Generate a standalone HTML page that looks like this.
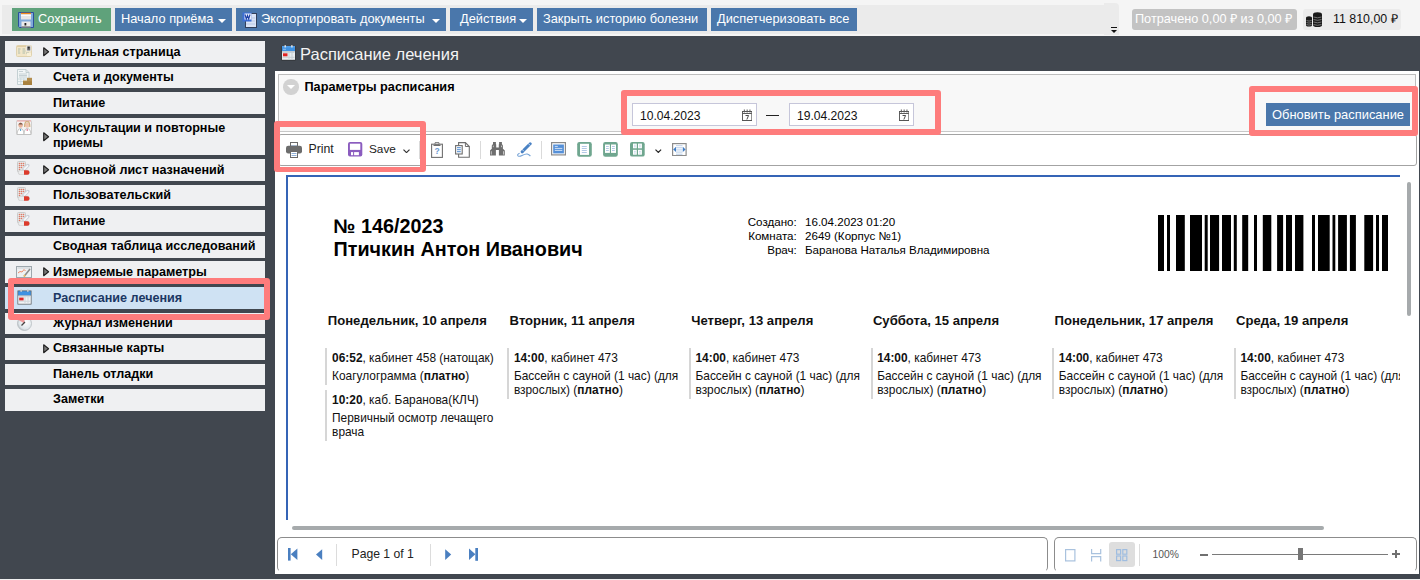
<!DOCTYPE html>
<html><head><meta charset="utf-8">
<style>
*{box-sizing:border-box}
html,body{margin:0;padding:0}
body{width:1420px;height:580px;overflow:hidden;position:relative;background:#41474f;font-family:"Liberation Sans",sans-serif;}
.a{position:absolute}
#topbar{left:0;top:0;width:1420px;height:36px;background:#f5f5f5}
#tb{left:2px;top:5px;width:1116px;height:29px;background:#ebebeb;border-top-right-radius:4px}
.btn{position:absolute;top:8px;height:23px;background:#4a77ab;color:#fff;font-size:12.8px;line-height:23px;white-space:nowrap}
.btn .t{position:absolute;top:-1px}
.caret{position:absolute;top:11px;width:0;height:0;border-left:4px solid transparent;border-right:4px solid transparent;border-top:4px solid #fff}
.side{position:absolute;left:5px;width:260px;background:#eff0f2;font-weight:bold;font-size:12.6px;color:#000}
.side .t{position:absolute;left:48px;top:0;line-height:15px;white-space:nowrap}
.side .ar{position:absolute;left:38px;width:0;height:0;border-top:4.5px solid transparent;border-bottom:4.5px solid transparent;border-left:5px solid #333}
.side svg{position:absolute}
.side .ar2{left:37.5px}
.inp{background:#fff;border:1px solid #c6c6da}
.it{position:absolute;left:7px;top:1.2px;font-size:12.1px;line-height:22px;color:#111}
.rt{position:absolute;font-weight:bold;font-size:19.8px;line-height:23px;color:#000;white-space:nowrap}
.ri{position:absolute;font-size:11.6px;line-height:14px;color:#000;white-space:nowrap}
.dh{position:absolute;font-weight:bold;font-size:13.1px;line-height:16px;color:#111;white-space:nowrap}
.en{position:absolute;border-left:2px solid #d6d6d6;padding:3px 0 2px 4.7px;font-size:11.9px;line-height:14px;color:#111;white-space:nowrap}
.en .tm{margin-bottom:4px}
.tbt{position:absolute;top:142px;font-size:12.3px;line-height:14px;color:#222;white-space:nowrap}
.rb{position:absolute;border:6px solid #fe7c7c;border-radius:3px}
.side.act{background:#cfe2f3;color:#1b3763}
</style></head><body>
<div id="topbar" class="a">
  <div id="tb" class="a"></div>
  <div class="btn" style="left:12px;width:99px;background:#5fa27b"><span class="t" style="left:26px">Сохранить</span></div>
  <div class="btn" style="left:115px;width:117px"><span class="t" style="left:6px">Начало приёма</span><span class="caret" style="left:103px"></span></div>
  <div class="btn" style="left:236px;width:210px"><span class="t" style="left:25px">Экспортировать документы</span><span class="caret" style="left:196px"></span></div>
  <div class="btn" style="left:450px;width:83px"><span class="t" style="left:10px">Действия</span><span class="caret" style="left:69px"></span></div>
  <div class="btn" style="left:537px;width:170px"><span class="t" style="left:6px">Закрыть историю болезни</span></div>
  <div class="btn" style="left:711px;width:146px"><span class="t" style="left:6px">Диспетчеризовать все</span></div>
  <div class="a" style="left:1132px;top:9px;width:165px;height:21px;border-radius:3px;background:#c3c3c3;color:#fff;font-size:12.7px;line-height:20px;padding-left:3px;white-space:nowrap">Потрачено 0,00 ₽ из 0,00 ₽</div>
  <div class="a" style="left:1303px;top:9px;width:98px;height:21px;border-radius:3px;background:#ebebeb;color:#111;font-size:12.4px;line-height:21px;white-space:nowrap"><span class="a" style="left:30px;top:0">11 810,00 ₽</span></div>
</div>

<!-- sidebar -->
<div id="sidebar">
<div class="side" style="top:41px;height:22px"><svg class="ic" style="left:11px;top:4.3px" width="16" height="12" viewBox="0 0 16 12"><rect x="0.5" y="0.5" width="15" height="11" rx="1" fill="#f2e6c8" stroke="#e0d2ae"/><path d="M1 1.5h14" stroke="#d9c79c" stroke-width="0.8"/><rect x="10.2" y="0.6" width="5" height="5.6" fill="#e8e8e8"/><rect x="11.2" y="1.4" width="3" height="4" fill="#6a6a6a"/><circle cx="12.7" cy="2.6" r="0.9" fill="#2a2a2a"/><path d="M2 4h2.5M2 6h1.8M2 8h2.2M6.5 4h2.5M6.5 6h3M6.5 8h2.5M10 8h3" stroke="#9fb3a6" stroke-width="0.8"/><rect x="11" y="8" width="4" height="3" fill="#f8f0d8"/></svg><svg class="ar2" style="top:6.2px" width="7" height="10" viewBox="0 0 7 10"><path d="M0.7 0.7L5.6 4.7L0.7 8.7z" fill="#7a7a7a" stroke="#1e1e1e" stroke-width="1.1" stroke-linejoin="round"/></svg><span class="t" style="top:0;line-height:22px">Титульная страница</span></div>
<div class="side" style="top:67px;height:21px"><svg class="ic" style="left:12px;top:2px" width="15" height="16" viewBox="0 0 15 16"><path d="M0.5 0.5h8.5l3 3V15.5H0.5z" fill="#f1f5f6" stroke="#b9c6ca" stroke-width="0.8"/><path d="M9 0.5v3h3" fill="none" stroke="#b9c6ca" stroke-width="0.8"/><path d="M2 2.5h4M2 5h8M2 6.5h8M2 8h8" stroke="#a9b9bf" stroke-width="0.6"/><path d="M1 10h10M1 12.5h7M3.8 8.8v6.5M6.8 8.8v6.5" stroke="#c7d5da" stroke-width="0.8"/><rect x="6" y="11.8" width="9" height="4.2" fill="#a8813f"/><rect x="10" y="8.8" width="5" height="3.5" fill="#b38e50"/><path d="M6 11.8h4" stroke="#c9a868" stroke-width="0.6"/></svg><span class="t" style="top:0;line-height:21px">Счета и документы</span></div>
<div class="side" style="top:92px;height:22px"><span class="t" style="top:0;line-height:22px">Питание</span></div>
<div class="side" style="top:118px;height:37px"><svg class="ic" style="left:11px;top:2px" width="16" height="15" viewBox="0 0 16 15"><rect x="0.5" y="0.5" width="15" height="14" rx="1" fill="#f3f3f3" stroke="#cfcfcf"/><path d="M1 1h14" stroke="#f3a0a0"/><ellipse cx="4.6" cy="5.2" rx="2.2" ry="2.6" fill="#e8b29b"/><path d="M2.2 4.5 Q4.6 0.8 7 4.5" fill="#7b5b4b"/><ellipse cx="11.2" cy="5.2" rx="2.2" ry="2.6" fill="#f0c4ae"/><path d="M8.6 7 Q8.6 1 11.2 1.8 Q13.8 1 13.8 7" fill="none" stroke="#cfae7d" stroke-width="1.2"/><path d="M1 14.5 Q1.5 8.5 4.6 8.5 Q7.7 8.5 8 14.5z" fill="#fff" stroke="#b9b9b9" stroke-width="0.8"/><path d="M8 14.5 Q8.3 8.5 11.2 8.5 Q14.5 8.5 15 14.5z" fill="#fff" stroke="#b9b9b9" stroke-width="0.8"/><path d="M4.6 9v2" stroke="#4aa0d0"/><path d="M11.2 9v2" stroke="#e06080"/></svg><svg class="ar2" style="top:13.7px" width="7" height="10" viewBox="0 0 7 10"><path d="M0.7 0.7L5.6 4.7L0.7 8.7z" fill="#7a7a7a" stroke="#1e1e1e" stroke-width="1.1" stroke-linejoin="round"/></svg><span class="t" style="top:3px;line-height:15px">Консультации и повторные<br>приемы</span></div>
<div class="side" style="top:159px;height:22px"><svg class="ic" style="left:12.3px;top:2.2px" width="13" height="14" viewBox="0 0 13 14"><rect x="0.5" y="0.5" width="8" height="10.5" rx="1" fill="#e6e6e6" stroke="#cacaca"/><g fill="#de7a66"><circle cx="2.5" cy="2.5" r=".8"/><circle cx="4.5" cy="2.5" r=".8"/><circle cx="6.5" cy="2.5" r=".8"/><circle cx="2.5" cy="4.5" r=".8"/><circle cx="4.5" cy="4.5" r=".8"/><circle cx="6.5" cy="4.5" r=".8"/><circle cx="2.5" cy="6.5" r=".8"/><circle cx="4.5" cy="6.5" r=".8"/><circle cx="2.5" cy="8.5" r=".8"/></g><path d="M7 8.3 L10.8 4.5" stroke="#c9ced6" stroke-width="3.4" stroke-linecap="round"/><path d="M7.3 8 L10.5 4.8" stroke="#f4f6f8" stroke-width="1.8" stroke-linecap="round"/><rect x="1.3" y="9.3" width="11.2" height="4.4" rx="2.2" fill="#ececec" stroke="#c4c4c4" stroke-width="0.6"/><path d="M7 9.3h3.3a2.2 2.2 0 0 1 0 4.4H7z" fill="#dc3b2c"/></svg><svg class="ar2" style="top:6.2px" width="7" height="10" viewBox="0 0 7 10"><path d="M0.7 0.7L5.6 4.7L0.7 8.7z" fill="#7a7a7a" stroke="#1e1e1e" stroke-width="1.1" stroke-linejoin="round"/></svg><span class="t" style="top:0;line-height:22px">Основной лист назначений</span></div>
<div class="side" style="top:185px;height:21px"><svg class="ic" style="left:12.3px;top:1.7px" width="13" height="14" viewBox="0 0 13 14"><rect x="0.5" y="0.5" width="8" height="10.5" rx="1" fill="#e6e6e6" stroke="#cacaca"/><g fill="#de7a66"><circle cx="2.5" cy="2.5" r=".8"/><circle cx="4.5" cy="2.5" r=".8"/><circle cx="6.5" cy="2.5" r=".8"/><circle cx="2.5" cy="4.5" r=".8"/><circle cx="4.5" cy="4.5" r=".8"/><circle cx="6.5" cy="4.5" r=".8"/><circle cx="2.5" cy="6.5" r=".8"/><circle cx="4.5" cy="6.5" r=".8"/><circle cx="2.5" cy="8.5" r=".8"/></g><path d="M7 8.3 L10.8 4.5" stroke="#c9ced6" stroke-width="3.4" stroke-linecap="round"/><path d="M7.3 8 L10.5 4.8" stroke="#f4f6f8" stroke-width="1.8" stroke-linecap="round"/><rect x="1.3" y="9.3" width="11.2" height="4.4" rx="2.2" fill="#ececec" stroke="#c4c4c4" stroke-width="0.6"/><path d="M7 9.3h3.3a2.2 2.2 0 0 1 0 4.4H7z" fill="#dc3b2c"/></svg><span class="t" style="top:0;line-height:21px">Пользовательский</span></div>
<div class="side" style="top:210px;height:22px"><svg class="ic" style="left:12.3px;top:2.2px" width="13" height="14" viewBox="0 0 13 14"><rect x="0.5" y="0.5" width="8" height="10.5" rx="1" fill="#e6e6e6" stroke="#cacaca"/><g fill="#de7a66"><circle cx="2.5" cy="2.5" r=".8"/><circle cx="4.5" cy="2.5" r=".8"/><circle cx="6.5" cy="2.5" r=".8"/><circle cx="2.5" cy="4.5" r=".8"/><circle cx="4.5" cy="4.5" r=".8"/><circle cx="6.5" cy="4.5" r=".8"/><circle cx="2.5" cy="6.5" r=".8"/><circle cx="4.5" cy="6.5" r=".8"/><circle cx="2.5" cy="8.5" r=".8"/></g><path d="M7 8.3 L10.8 4.5" stroke="#c9ced6" stroke-width="3.4" stroke-linecap="round"/><path d="M7.3 8 L10.5 4.8" stroke="#f4f6f8" stroke-width="1.8" stroke-linecap="round"/><rect x="1.3" y="9.3" width="11.2" height="4.4" rx="2.2" fill="#ececec" stroke="#c4c4c4" stroke-width="0.6"/><path d="M7 9.3h3.3a2.2 2.2 0 0 1 0 4.4H7z" fill="#dc3b2c"/></svg><span class="t" style="top:0;line-height:22px">Питание</span></div>
<div class="side" style="top:236px;height:21.5px"><span class="t" style="top:0;line-height:21.5px">Сводная таблица исследований</span></div>
<div class="side" style="top:261px;height:22px"><svg class="ic" style="left:11px;top:5px" width="16" height="12" viewBox="0 0 16 12"><rect x="0.5" y="0.5" width="15" height="11" fill="#eef1f3" stroke="#9da7ad"/><rect x="1.5" y="1.5" width="13" height="1" fill="#c9d0d4"/><path d="M2 7 L4 5.5 L6 6 L8 3.5 L9.5 5" stroke="#ee8a6a" fill="none" stroke-width="1"/><path d="M8 10.5 L14 3" stroke="#8b8b8b" stroke-width="1.6"/><path d="M8 10.5 L9 9" stroke="#f0c060" stroke-width="1.6"/></svg><svg class="ar2" style="top:6.2px" width="7" height="10" viewBox="0 0 7 10"><path d="M0.7 0.7L5.6 4.7L0.7 8.7z" fill="#7a7a7a" stroke="#1e1e1e" stroke-width="1.1" stroke-linejoin="round"/></svg><span class="t" style="top:0;line-height:22px">Измеряемые параметры</span></div>
<div class="side act" style="top:287px;height:22px"><svg class="ic" style="left:12px;top:2px" width="15" height="16" viewBox="0 0 15 16"><rect x="0.5" y="1.5" width="14" height="14" fill="#5b5b5b"/><rect x="1.2" y="2.2" width="12.6" height="4.3" fill="#3f92e2"/><rect x="1.2" y="6.5" width="12.6" height="8.3" fill="#f0f3f5"/><g fill="#cfd6da"><rect x="1.5" y="7.2" width="12" height="1"/><rect x="7.5" y="7.2" width="1" height="7.3"/><rect x="10.5" y="7.2" width="1" height="7.3"/><rect x="1.5" y="11.7" width="12" height="1"/></g><rect x="2.2" y="8.6" width="4.4" height="2.8" fill="#e02a2a"/><rect x="3.4" y="0" width="1.5" height="3" rx=".7" fill="#cfcfcf"/><rect x="10.1" y="0" width="1.5" height="3" rx=".7" fill="#cfcfcf"/></svg><span class="t" style="top:0;line-height:22px">Расписание лечения</span></div>
<div class="side" style="top:312.5px;height:21.5px"><svg class="ic" style="left:12px;top:3px" width="15" height="15" viewBox="0 0 15 15"><defs><radialGradient id="cg" cx="0.6" cy="0.4" r="0.7"><stop offset="0" stop-color="#ffffff"/><stop offset="0.7" stop-color="#dfe6ea"/><stop offset="1" stop-color="#a9b1b6"/></radialGradient></defs><circle cx="7.5" cy="7.5" r="7" fill="url(#cg)" stroke="#b5bbbf" stroke-width="0.8"/><path d="M7.5 7.5 L7.5 0.5 A7 7 0 0 0 1.5 4z" fill="#f08a8a" opacity="0.85"/><path d="M4.5 9.5 L8 6" stroke="#444" stroke-width="1.2"/></svg><span class="t" style="top:0;line-height:21.5px">Журнал изменений</span></div>
<div class="side" style="top:338px;height:21.5px"><svg class="ar2" style="top:5.9px" width="7" height="10" viewBox="0 0 7 10"><path d="M0.7 0.7L5.6 4.7L0.7 8.7z" fill="#7a7a7a" stroke="#1e1e1e" stroke-width="1.1" stroke-linejoin="round"/></svg><span class="t" style="top:0;line-height:21.5px">Связанные карты</span></div>
<div class="side" style="top:363.5px;height:21.5px"><span class="t" style="top:0;line-height:21.5px">Панель отладки</span></div>
<div class="side" style="top:389px;height:21.5px"><span class="t" style="top:0;line-height:21.5px">Заметки</span></div>
</div>

<!-- main panel -->
<svg class="a" style="left:281px;top:45px" width="15" height="16" viewBox="0 0 15 16"><rect x="0.5" y="1" width="14" height="14.5" fill="#2e3033"/><rect x="1" y="1.2" width="13" height="5" fill="#3f92e2"/><rect x="1" y="1.2" width="13" height="1.2" fill="#5aa6ee"/><rect x="1" y="6.2" width="13" height="8.6" fill="#e9eef0"/><g fill="#c9d1d5"><rect x="1.5" y="7" width="12" height="1"/><rect x="7.5" y="7" width="1" height="7.5"/><rect x="10.5" y="7" width="1" height="7.5"/><rect x="1.5" y="11.8" width="12" height="1"/></g><rect x="2" y="8.3" width="4.5" height="3" fill="#e02424"/><rect x="3.5" y="0" width="1.4" height="2.6" rx=".7" fill="#e8e8e8"/><rect x="10.2" y="0" width="1.4" height="2.6" rx=".7" fill="#e8e8e8"/><rect x="2" y="3.8" width="3" height=".8" fill="#a9cdf3"/></svg>
<div class="a" style="left:300px;top:44px;color:#f4f4f4;font-size:16.5px;line-height:20px;white-space:nowrap">Расписание лечения</div>

<div class="a" style="left:275px;top:71px;width:1144px;height:503px;background:#fff"></div>
<div class="a" style="left:0;top:579px;width:1420px;height:1px;background:#f0f0f0"></div>

<!-- params panel -->
<div class="a" style="left:278px;top:74px;width:1138px;height:58px;background:#f8f8f8;border:1px solid #bdbdbd;border-bottom-color:#c8c8c8"></div>
<div class="a" style="left:283.2px;top:79.1px;width:15.5px;height:15.5px;border-radius:50%;background:#d2d2d2"></div>
<div class="a" style="left:287.2px;top:85.1px;width:0;height:0;border-left:4px solid transparent;border-right:4px solid transparent;border-top:4.5px solid #fff"></div>
<div class="a" style="left:304.5px;top:79.7px;font-weight:bold;font-size:12.7px;line-height:15px;color:#000;white-space:nowrap">Параметры расписания</div>

<div class="a inp" style="left:632px;top:103px;width:125px;height:23px"><span class="it">10.04.2023</span></div>
<div class="a inp" style="left:789px;top:103px;width:125px;height:23px"><span class="it">19.04.2023</span></div>
<div class="a" style="left:766px;top:114.5px;width:13px;height:1.2px;background:#222"></div>
<div class="a" style="left:1266px;top:103px;width:144px;height:23px;background:#4a77ab;color:#fff;font-size:12.9px;line-height:23.4px;padding-left:6px;white-space:nowrap">Обновить расписание</div>

<!-- toolbar -->
<div class="a" style="left:278px;top:134px;width:1138.5px;height:32px;background:#fff;border:1px solid #a3a3a3;border-radius:3px"></div>

<!-- report page -->
<div class="a" style="left:286px;top:175px;width:1114px;height:2px;background:#3564b6"></div>
<div class="a" style="left:286px;top:175px;width:2px;height:345px;background:#3564b6"></div>
<div class="a" style="left:1407px;top:181.5px;width:4px;height:134px;border-radius:2px;background:#a6aaac"></div>
<div class="a" style="left:292px;top:526px;width:1032px;height:4px;border-radius:2px;background:#a6aaac"></div>
<div id="rpt" class="a" style="left:288px;top:177px;width:1112px;height:343px;overflow:hidden;background:#fff"><div class="rt" style="left:45.5px;top:38.2px">№ 146/2023<br>Птичкин Антон Иванович</div><div class="ri" style="left:400px;top:37.8px;width:108.8px;text-align:right">Создано:<br>Комната:<br>Врач:</div><div class="ri" style="left:517px;top:37.8px">16.04.2023 01:20<br>2649 (Корпус №1)<br>Баранова Наталья Владимировна</div><svg class="a" style="left:862px;top:38.0px" width="240" height="60" viewBox="0 0 240 60"><rect x="8.0" y="0" width="6.0" height="56" fill="#000"/><rect x="17.0" y="0" width="3.0" height="56" fill="#000"/><rect x="26.0" y="0" width="8.8" height="56" fill="#000"/><rect x="40.0" y="0" width="12.0" height="56" fill="#000"/><rect x="54.7" y="0" width="3.0" height="56" fill="#000"/><rect x="60.0" y="0" width="9.1" height="56" fill="#000"/><rect x="72.0" y="0" width="9.0" height="56" fill="#000"/><rect x="83.8" y="0" width="3.0" height="56" fill="#000"/><rect x="92.2" y="0" width="6.0" height="56" fill="#000"/><rect x="104.0" y="0" width="3.0" height="56" fill="#000"/><rect x="112.8" y="0" width="8.5" height="56" fill="#000"/><rect x="127.1" y="0" width="6.0" height="56" fill="#000"/><rect x="136.0" y="0" width="6.0" height="56" fill="#000"/><rect x="145.0" y="0" width="8.4" height="56" fill="#000"/><rect x="162.0" y="0" width="3.0" height="56" fill="#000"/><rect x="168.0" y="0" width="11.7" height="56" fill="#000"/><rect x="182.5" y="0" width="2.8" height="56" fill="#000"/><rect x="188.1" y="0" width="8.8" height="56" fill="#000"/><rect x="199.9" y="0" width="6.0" height="56" fill="#000"/><rect x="214.3" y="0" width="8.8" height="56" fill="#000"/><rect x="226.0" y="0" width="3.0" height="56" fill="#000"/><rect x="232.0" y="0" width="6.0" height="56" fill="#000"/></svg><div class="dh" style="left:39.8px;top:135.9px">Понедельник, 10 апреля</div><div class="en" style="left:37.4px;top:171px;height:37px"><div class="tm"><b>06:52</b>, кабинет 458 (натощак)</div><div class="ds">Коагулограмма (<b>платно</b>)</div></div><div class="en" style="left:37.4px;top:213px;height:51px"><div class="tm"><b>10:20</b>, каб. Баранова(КЛЧ)</div><div class="ds">Первичный осмотр лечащего<br>врача</div></div><div class="dh" style="left:221.6px;top:135.9px">Вторник, 11 апреля</div><div class="en" style="left:219.2px;top:171px;height:51px"><div class="tm"><b>14:00</b>, кабинет 473</div><div class="ds">Бассейн с сауной (1 час) (для<br>взрослых) (<b>платно</b>)</div></div><div class="dh" style="left:403.2px;top:135.9px">Четверг, 13 апреля</div><div class="en" style="left:400.8px;top:171px;height:51px"><div class="tm"><b>14:00</b>, кабинет 473</div><div class="ds">Бассейн с сауной (1 час) (для<br>взрослых) (<b>платно</b>)</div></div><div class="dh" style="left:584.9px;top:135.9px">Суббота, 15 апреля</div><div class="en" style="left:582.5px;top:171px;height:51px"><div class="tm"><b>14:00</b>, кабинет 473</div><div class="ds">Бассейн с сауной (1 час) (для<br>взрослых) (<b>платно</b>)</div></div><div class="dh" style="left:766.5px;top:135.9px">Понедельник, 17 апреля</div><div class="en" style="left:764.1px;top:171px;height:51px"><div class="tm"><b>14:00</b>, кабинет 473</div><div class="ds">Бассейн с сауной (1 час) (для<br>взрослых) (<b>платно</b>)</div></div><div class="dh" style="left:948.1px;top:135.9px">Среда, 19 апреля</div><div class="en" style="left:945.7px;top:171px;height:51px"><div class="tm"><b>14:00</b>, кабинет 473</div><div class="ds">Бассейн с сауной (1 час) (для<br>взрослых) (<b>платно</b>)</div></div></div>

<!-- nav -->
<div class="a" style="left:277px;top:537px;width:771px;height:35px;border:1px solid #8c8c8c;border-bottom-color:transparent;border-radius:5px"></div>
<div class="a" style="left:1054px;top:537px;width:362.5px;height:35px;border:1px solid #8c8c8c;border-bottom-color:transparent;border-radius:5px"></div>

<!-- top icons -->
<div class="a" style="left:1104px;top:3px;width:14.5px;height:32px;background:#ebebeb;border-top-right-radius:4px"></div>
<div class="a" style="left:1111px;top:27px;width:6.2px;height:1.3px;background:#111"></div>
<div class="a" style="left:1110.7px;top:29.5px;width:0;height:0;border-left:3.5px solid transparent;border-right:3.5px solid transparent;border-top:3.6px solid #111"></div>
<svg class="a" style="left:18px;top:11.8px" width="16" height="16" viewBox="0 0 16 16"><path d="M0.5 0.5h15v15h-14l-1-1z" fill="#7fa9da" stroke="#2b4f9c"/><rect x="3" y="0.8" width="10" height="1.7" fill="#f08a1a"/><rect x="3" y="2.5" width="10" height="5" fill="#e6e6e6"/><rect x="3" y="2.5" width="10" height="1.5" fill="#fafafa"/><rect x="3.5" y="9.5" width="9" height="6" fill="#eaeaea"/><rect x="3.5" y="14.5" width="9" height="1" fill="#555"/><rect x="6.5" y="11" width="1.8" height="2.5" fill="#222"/></svg>
<svg class="a" style="left:242px;top:11.8px" width="16" height="16" viewBox="0 0 16 16"><rect x="3.5" y="1.5" width="11" height="14" fill="#d9e4f6" stroke="#33405a"/><path d="M4 6h9M4 9h9M4 12h9" stroke="#b7c7e5"/><rect x="0.5" y="0.5" width="9" height="9" fill="#3c6fd6"/><rect x="2.5" y="1.5" width="7" height="6" fill="#e8eef9"/><path d="M3 2.5l1.3 4.5 1.2-3.5 1.2 3.5 1.3-4.5" stroke="#1b3fa8" stroke-width="1.1" fill="none"/></svg>
<svg class="a" style="left:1306px;top:12px" width="17" height="16" viewBox="0 0 17 16"><g fill="#1a1a1a"><path d="M0 6a3 1.8 0 0 1 6 0v7a3 1.6 0 0 1-6 0z"/><path d="M7 2.5a4.5 2.2 0 0 1 9 0v10.5a4.5 2 0 0 1-9 0z"/></g><g stroke="#8a8a8a" stroke-width="0.8" fill="none"><path d="M0.5 8.5q2.5 1.2 5 0M0.5 10.5q2.5 1.2 5 0M0.5 12.5q2.5 1.2 5 0"/><path d="M7.5 5q4 1.6 8 0M7.5 7.5q4 1.6 8 0M7.5 10q4 1.6 8 0M7.5 12.5q4 1.6 8 0"/></g></svg>

<!-- input calendar icons -->
<svg class="a" style="left:741.5px;top:109px" width="10.3" height="12" viewBox="0 0 11 12" preserveAspectRatio="none"><rect x="0.5" y="2.5" width="10" height="9" fill="none" stroke="#555"/><path d="M0.5 4.5h10" stroke="#555"/><path d="M2.5 0.5v3M5.5 0.5v3M8.5 0.5v3" stroke="#555"/><path d="M3.8 6.5h3.2l-1.8 4" stroke="#333" stroke-width="0.9" fill="none"/></svg>
<svg class="a" style="left:898.5px;top:109px" width="10.3" height="12" viewBox="0 0 11 12" preserveAspectRatio="none"><rect x="0.5" y="2.5" width="10" height="9" fill="none" stroke="#555"/><path d="M0.5 4.5h10" stroke="#555"/><path d="M2.5 0.5v3M5.5 0.5v3M8.5 0.5v3" stroke="#555"/><path d="M3.8 6.5h3.2l-1.8 4" stroke="#333" stroke-width="0.9" fill="none"/></svg>

<!-- report toolbar -->
<svg class="a" style="left:286px;top:142px" width="16" height="16" viewBox="0 0 16 16"><rect x="4.5" y="0.5" width="7" height="5" fill="#fff" stroke="#6b6b6b"/><rect x="5" y="3.3" width="6" height="1.2" fill="#9ab8dd"/><rect x="0" y="3.8" width="16" height="7.6" rx="2.2" fill="#6d6d6d"/><rect x="4.5" y="9.5" width="7" height="6" fill="#fff" stroke="#6b6b6b"/><rect x="5.5" y="11" width="5" height="1" fill="#8fb0d8"/><rect x="5.5" y="13" width="5" height="1" fill="#8fb0d8"/></svg>
<div class="a tbt" style="left:308.5px">Print</div>
<svg class="a" style="left:348px;top:142.2px" width="14.5" height="14.5" viewBox="0 0 14.5 14.5"><rect x="0" y="0" width="14.3" height="14.4" rx="2" fill="#8b5cbf"/><rect x="1.9" y="1.7" width="10.4" height="6.2" fill="#fff"/><rect x="3" y="10.1" width="2.1" height="3.1" fill="#fff"/><rect x="6.1" y="10.1" width="4.8" height="3.1" fill="#fff"/></svg>
<div class="a tbt" style="left:369px;font-size:11.8px">Save</div>
<svg class="a" style="left:402.5px;top:148.5px" width="7" height="4.5" viewBox="0 0 7 4.5"><path d="M0.5 0.6L3.5 3.6L6.5 0.6" stroke="#333" stroke-width="1.2" fill="none"/></svg>
<div class="a" style="left:419px;top:141px;width:1px;height:18px;background:#dadada"></div>
<svg class="a" style="left:431px;top:142px" width="12" height="16" viewBox="0 0 12 16"><rect x="0.6" y="2.2" width="10.8" height="13.2" fill="#fff" stroke="#707070" stroke-width="1.1"/><path d="M2.5 2.8h7v1.2h-7z" fill="#707070"/><rect x="4" y="0.3" width="4" height="2.6" rx="1" fill="none" stroke="#707070" stroke-width="1"/><text x="6" y="12.3" font-family="Liberation Sans" font-size="8.5" font-weight="bold" fill="#6d9bd3" text-anchor="middle">?</text></svg>
<svg class="a" style="left:455px;top:142.3px" width="15" height="16" viewBox="0 0 15 16"><path d="M3.6 0.6h6.8l3.9 3.9v10.8H3.6z" fill="#fff" stroke="#6e6e6e" stroke-width="1.1"/><path d="M10.4 0.6v3.9h3.9" fill="none" stroke="#6e6e6e"/><rect x="0.6" y="3.6" width="6.6" height="8.4" fill="#fff" stroke="#6e6e6e" stroke-width="1.1"/><path d="M2 5.6h3.8M2 7.6h3.8M2 9.6h3.8" stroke="#6f9fd8" stroke-width="1.1"/></svg>
<div class="a" style="left:480px;top:141px;width:1px;height:18px;background:#dadada"></div>
<svg class="a" style="left:490px;top:142.2px" width="15" height="14" viewBox="0 0 15 14"><path d="M3 0H5.9V2L6.2 2.6V5.5H8.8V2.6L9.1 2V0H11.9V2L12.9 3.6V6.8L14.8 8.6V13.5H8.9V8H5.9V13.5H0V8.6L1.8 6.8V3.6L3 2z" fill="#6e6e6e"/><path d="M1.3 9.2v3.4M13.5 9.2v3.4M3.3 3.6v1.6M11.5 3.6v1.6" stroke="#fff" stroke-width="0.8" opacity="0.75"/></svg>
<svg class="a" style="left:517px;top:142px" width="15" height="15" viewBox="0 0 15 15"><path d="M5.2 9.8L13.2 1.8" stroke="#4a82c4" stroke-width="3" stroke-linecap="round"/><path d="M4 11.2l1.3-3.2 1.9 1.9z" fill="#4a82c4"/><path d="M2.6 11.2q-2.8 1.2-1.6 2.6q1.2 1 4-0.4q3.6-1.8 5.3-1.4q1.5 0.4 3.1 2" stroke="#76a3d6" stroke-width="1.1" fill="none"/><path d="M11.1 1.3L13.2 3.5M4.9 7.2L6.8 9.2" stroke="#fff" stroke-width="0.7"/></svg>
<div class="a" style="left:541px;top:141px;width:1px;height:18px;background:#dadada"></div>
<svg class="a" style="left:551px;top:142.4px" width="15" height="13.5" viewBox="0 0 15 13.5"><rect x="0.6" y="0.6" width="13.8" height="12.3" fill="#fff" stroke="#8a8a8a" stroke-width="1.2"/><rect x="2.2" y="2.5" width="10.7" height="8.9" fill="#5590d8"/><path d="M3.8 4.4h3M3.8 6.4h7.5M3.8 8.4h7.5" stroke="#dbe8f7" stroke-width="0.9"/></svg>
<svg class="a" style="left:577px;top:142px" width="15" height="15" viewBox="0 0 15 15"><rect x="0.2" y="0.1" width="14.6" height="14.7" rx="2.2" fill="#6fa68f"/><rect x="3" y="1.8" width="9" height="11.1" fill="#fff"/><path d="M4.8 4.5h5M4.8 6.5h5M4.8 8.5h5M4.8 10.5h5" stroke="#b3c9e6" stroke-width="1"/></svg>
<svg class="a" style="left:603px;top:142px" width="15" height="15" viewBox="0 0 15 15"><rect x="0.1" y="0.1" width="14.7" height="14.7" rx="2.2" fill="#6fa68f"/><rect x="2" y="2.5" width="4.9" height="8.4" fill="#fff"/><rect x="8" y="2.5" width="5" height="8.4" fill="#fff"/><path d="M3 4.5h2.8M3 6.5h2.8M3 8.5h2.8M9 4.5h2.8M9 6.5h2.8M9 8.5h2.8" stroke="#b3c9e6" stroke-width="1"/></svg>
<svg class="a" style="left:630.1px;top:142.1px" width="15" height="15" viewBox="0 0 15 15"><rect x="0" y="0" width="14.7" height="14.6" rx="2.2" fill="#6fa68f"/><rect x="3" y="1.6" width="3.8" height="4.7" fill="#fff"/><rect x="8" y="1.6" width="3.9" height="4.7" fill="#fff"/><rect x="3" y="7.8" width="3.8" height="4.9" fill="#fff"/><rect x="8" y="7.8" width="3.9" height="4.9" fill="#fff"/><path d="M4 3.2h1.8M4 4.8h1.8M9 3.2h1.8M9 4.8h1.8M4 9.4h1.8M4 11h1.8M9 9.4h1.8M9 11h1.8" stroke="#bcd0e8" stroke-width="0.8"/></svg>
<svg class="a" style="left:654.8px;top:148.8px" width="7" height="4.5" viewBox="0 0 7 4.5"><path d="M0.5 0.6L3.3 3.4L6.1 0.6" stroke="#222" stroke-width="1.2" fill="none"/></svg>
<svg class="a" style="left:672px;top:142.6px" width="15" height="13.5" viewBox="0 0 15 13.5"><rect x="0.6" y="0.6" width="13.5" height="12" fill="#fff" stroke="#8c8c8c" stroke-width="1.2"/><path d="M4 2.6h6.5M4 4.4h6.5M4 6.2h6.5M4 8h6.5M4 9.8h6.5M4 11.4h6.5" stroke="#c4d6ec" stroke-width="1"/><path d="M1.2 6.4L4 3.8V9z" fill="#3f7dc6"/><path d="M13.6 6.4L10.8 3.8V9z" fill="#3f7dc6"/></svg>

<!-- nav -->
<svg class="a" style="left:287.8px;top:548px" width="10" height="13" viewBox="0 0 10 13"><rect x="0" y="0" width="2.6" height="12.6" fill="#4a7fc0"/><path d="M9.4 0.5L2.8 6.3L9.4 12.1z" fill="#4a7fc0"/></svg>
<svg class="a" style="left:316px;top:548.5px" width="7" height="12" viewBox="0 0 7 12"><path d="M6.2 0.2L0 5.6L6.2 11z" fill="#4a7fc0"/></svg>
<div class="a" style="left:336px;top:544px;width:1px;height:22px;background:#dcdcdc"></div>
<div class="a" style="left:351.5px;top:544.2px;font-size:12.2px;line-height:20px;color:#222;white-space:nowrap">Page 1 of 1</div>
<div class="a" style="left:430px;top:544px;width:1px;height:22px;background:#dcdcdc"></div>
<svg class="a" style="left:445px;top:548.5px" width="7" height="12" viewBox="0 0 7 12"><path d="M0.2 0.2L6.2 5.6L0.2 11z" fill="#4a7fc0"/></svg>
<svg class="a" style="left:469px;top:548px" width="10" height="13" viewBox="0 0 10 13"><path d="M0 0.5L6.4 6.3L0 12.1z" fill="#4a7fc0"/><rect x="6.3" y="0" width="2.7" height="12.8" fill="#4a7fc0"/></svg>

<svg class="a" style="left:1065px;top:548.5px" width="11" height="13" viewBox="0 0 11 13"><rect x="0.6" y="0.6" width="9.3" height="11.3" fill="none" stroke="#a9c2de" stroke-width="1.2"/></svg>
<svg class="a" style="left:1091px;top:548.5px" width="11" height="13" viewBox="0 0 11 13"><path d="M0.6 0v5.2M9.7 0v5.2M0.6 7v5.4M9.7 7v5.4M0.6 4.6h9.1M0.6 7.6h9.1" stroke="#a9c2de" stroke-width="1.2"/></svg>
<div class="a" style="left:1109px;top:542.3px;width:26px;height:25.2px;border-radius:3px;background:#dedede"></div>
<svg class="a" style="left:1115.5px;top:548.5px" width="12" height="13" viewBox="0 0 12 13"><g fill="none" stroke="#9fbde0" stroke-width="1.2"><rect x="0.6" y="0.6" width="4" height="4.6"/><rect x="6.8" y="0.6" width="4" height="4.6"/><rect x="0.6" y="7" width="4" height="4.6"/><rect x="6.8" y="7" width="4" height="4.6"/></g></svg>
<div class="a" style="left:1139px;top:544px;width:1px;height:22px;background:#dcdcdc"></div>
<div class="a" style="left:1152.5px;top:546px;font-size:10.3px;line-height:18px;color:#555;white-space:nowrap">100%</div>
<div class="a" style="left:1200px;top:554px;width:8px;height:1.8px;background:#707070"></div>
<div class="a" style="left:1212px;top:554px;width:176px;height:1.2px;background:#7a7a7a"></div>
<div class="a" style="left:1298px;top:548px;width:5px;height:12px;background:#767676"></div>
<div class="a" style="left:1392px;top:553px;width:8px;height:1.8px;background:#707070"></div>
<div class="a" style="left:1395.1px;top:549.5px;width:1.8px;height:8.5px;background:#707070"></div>

<!-- red highlight boxes -->
<div class="rb" style="left:621px;top:90px;width:320px;height:44.5px"></div>
<div class="rb" style="left:1249.4px;top:86.2px;width:168.6px;height:49.4px"></div>
<div class="rb" style="left:274.2px;top:121px;width:151.5px;height:51.4px;border-bottom-width:5.3px"></div>
<div class="rb" style="left:8.2px;top:278.2px;width:262px;height:41.5px;border-bottom-width:6.6px"></div>
</body></html>
